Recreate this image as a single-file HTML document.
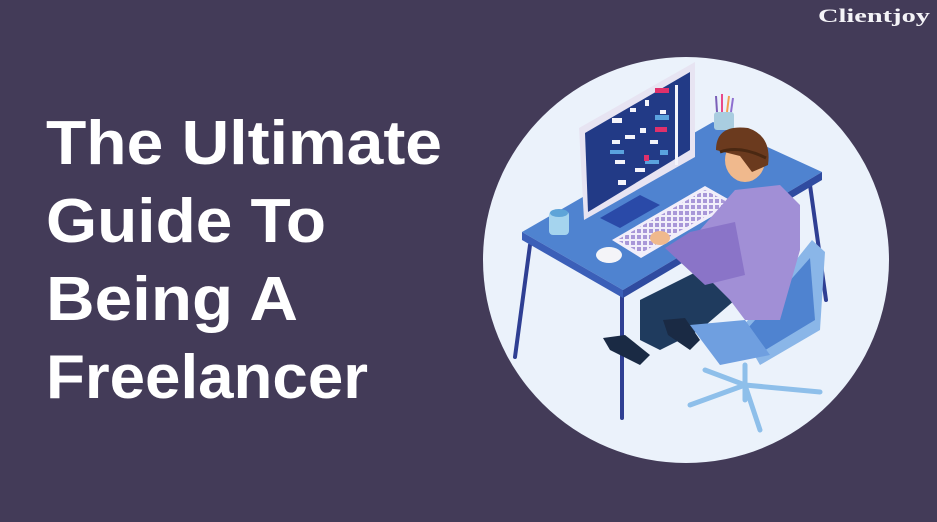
<!DOCTYPE html>
<html><head><meta charset="utf-8"><style>
html,body{margin:0;padding:0;width:937px;height:522px;overflow:hidden;background:#433b58}
</style></head><body>
<svg width="937" height="522" viewBox="0 0 937 522" xmlns="http://www.w3.org/2000/svg">
<defs><pattern id="keys" width="6" height="6" patternUnits="userSpaceOnUse"><rect width="6" height="6" fill="#f1eefa"/><rect x="1" y="1" width="4" height="4" fill="#a897d8"/></pattern></defs>
<rect width="937" height="522" fill="#433b58"/>
<text x="818" y="22" font-family="Liberation Serif, serif" font-weight="bold" font-size="19" fill="#f4f3f7" textLength="112" lengthAdjust="spacingAndGlyphs">Clientjoy</text>
<g font-family="Liberation Sans, sans-serif" font-weight="bold" font-size="62" fill="#ffffff">
<text x="46" y="164" textLength="396" lengthAdjust="spacingAndGlyphs">The Ultimate</text>
<text x="46" y="242" textLength="280" lengthAdjust="spacingAndGlyphs">Guide To</text>
<text x="46" y="320" textLength="252" lengthAdjust="spacingAndGlyphs">Being A</text>
<text x="46" y="398" textLength="322" lengthAdjust="spacingAndGlyphs">Freelancer</text>
</g>
<circle cx="686" cy="260" r="203" fill="#ebf2fb"/>
<g stroke="#2f3f93" stroke-width="4" fill="none" stroke-linecap="round">
<line x1="530" y1="245" x2="515" y2="357"/>
<line x1="622" y1="295" x2="622" y2="418"/>
<line x1="810" y1="185" x2="826" y2="300"/>
</g>
<polygon points="522,232 713,122 822,172 623,290" fill="#4f83d0"/>
<polygon points="522,232 623,290 623,298 522,240" fill="#3b5fb8"/>
<polygon points="623,290 822,172 822,180 623,298" fill="#2f4ba0"/>
<polygon points="600,218 640,195 660,205 620,228" fill="#2a4aa8"/>
<polygon points="579,128 695,62 695,157 584,220" fill="#e7e4f2"/>
<polygon points="585,133 690,72 690,150 588,212" fill="#223a86"/>
<g fill="#f4f4fb">
<rect x="612" y="118" width="10" height="5"/><rect x="630" y="108" width="6" height="4"/><rect x="645" y="100" width="4" height="6"/>
<rect x="612" y="140" width="8" height="4"/><rect x="625" y="135" width="10" height="4"/><rect x="615" y="160" width="10" height="4"/>
<rect x="640" y="128" width="6" height="5"/><rect x="650" y="140" width="8" height="4"/><rect x="618" y="180" width="8" height="5"/>
<rect x="635" y="168" width="10" height="4"/><rect x="660" y="110" width="6" height="4"/><rect x="675" y="85" width="3" height="80"/>
</g>
<g fill="#5aa2de"><rect x="655" y="115" width="14" height="5"/><rect x="610" y="150" width="14" height="4"/><rect x="645" y="160" width="14" height="4"/><rect x="660" y="150" width="8" height="5"/></g>
<g fill="#e0306b"><rect x="655" y="88" width="14" height="5"/><rect x="655" y="127" width="12" height="5"/><rect x="644" y="155" width="5" height="6"/></g>
<rect x="714" y="112" width="20" height="18" rx="3" fill="#a9cde0"/>
<g stroke-width="2"><line x1="717" y1="112" x2="716" y2="96" stroke="#7a5fb8"/><line x1="722" y1="112" x2="722" y2="94" stroke="#e84a8a"/><line x1="727" y1="112" x2="729" y2="96" stroke="#f2a050"/><line x1="731" y1="112" x2="733" y2="98" stroke="#8e6fd0"/></g>
<rect x="549" y="211" width="20" height="24" rx="4" fill="#a5d4ee"/>
<ellipse cx="559" cy="213" rx="9" ry="4" fill="#5ea4d8"/>
<ellipse cx="609" cy="255" rx="13" ry="8" fill="#f4f4f8"/>
<polygon points="612,240 705,186 735,203 641,258" fill="#f1eefa"/>
<polygon points="617,240 705,190 729,203 641,253" fill="url(#keys)"/>
<path d="M640 300 L700 270 L735 300 L700 330 L660 350 L640 340 Z" fill="#1f3b5e"/>
<path d="M603 338 L625 335 L650 355 L640 365 L610 350 Z" fill="#1a2a44"/>
<path d="M663 320 L685 318 L700 340 L690 350 L668 335 Z" fill="#1a2a44"/>
<polygon points="740,330 812,240 825,252 820,330 760,365" fill="#8ab6e8"/>
<polygon points="748,328 810,258 815,320 762,352" fill="#4f83d0"/>
<polygon points="690,325 745,320 770,355 720,365" fill="#6f9fe0"/>
<g stroke="#8ebfea" stroke-width="5" stroke-linecap="round">
<line x1="745" y1="365" x2="745" y2="400"/><line x1="745" y1="385" x2="690" y2="405"/><line x1="745" y1="385" x2="820" y2="392"/><line x1="745" y1="385" x2="760" y2="430"/><line x1="745" y1="385" x2="705" y2="370"/>
</g>
<path d="M735 190 L780 185 L800 205 L800 250 L780 320 L745 320 L730 300 L700 270 L680 245 L700 230 Z" fill="#a18fd6"/>
<path d="M690 232 L735 222 L745 275 L705 285 L665 248 Z" fill="#8a74c8"/>
<ellipse cx="660" cy="238" rx="10" ry="7" fill="#f0b98d"/>
<ellipse cx="745" cy="160" rx="20" ry="22" fill="#f0b98d"/>
<path d="M716 150 Q716 124 748 128 Q772 136 768 165 L752 172 L740 156 Z" fill="#6b3a1e"/>
<path d="M720 152 Q740 145 766 158" stroke="#4a2812" stroke-width="3" fill="none"/>
</svg>
</body></html>
